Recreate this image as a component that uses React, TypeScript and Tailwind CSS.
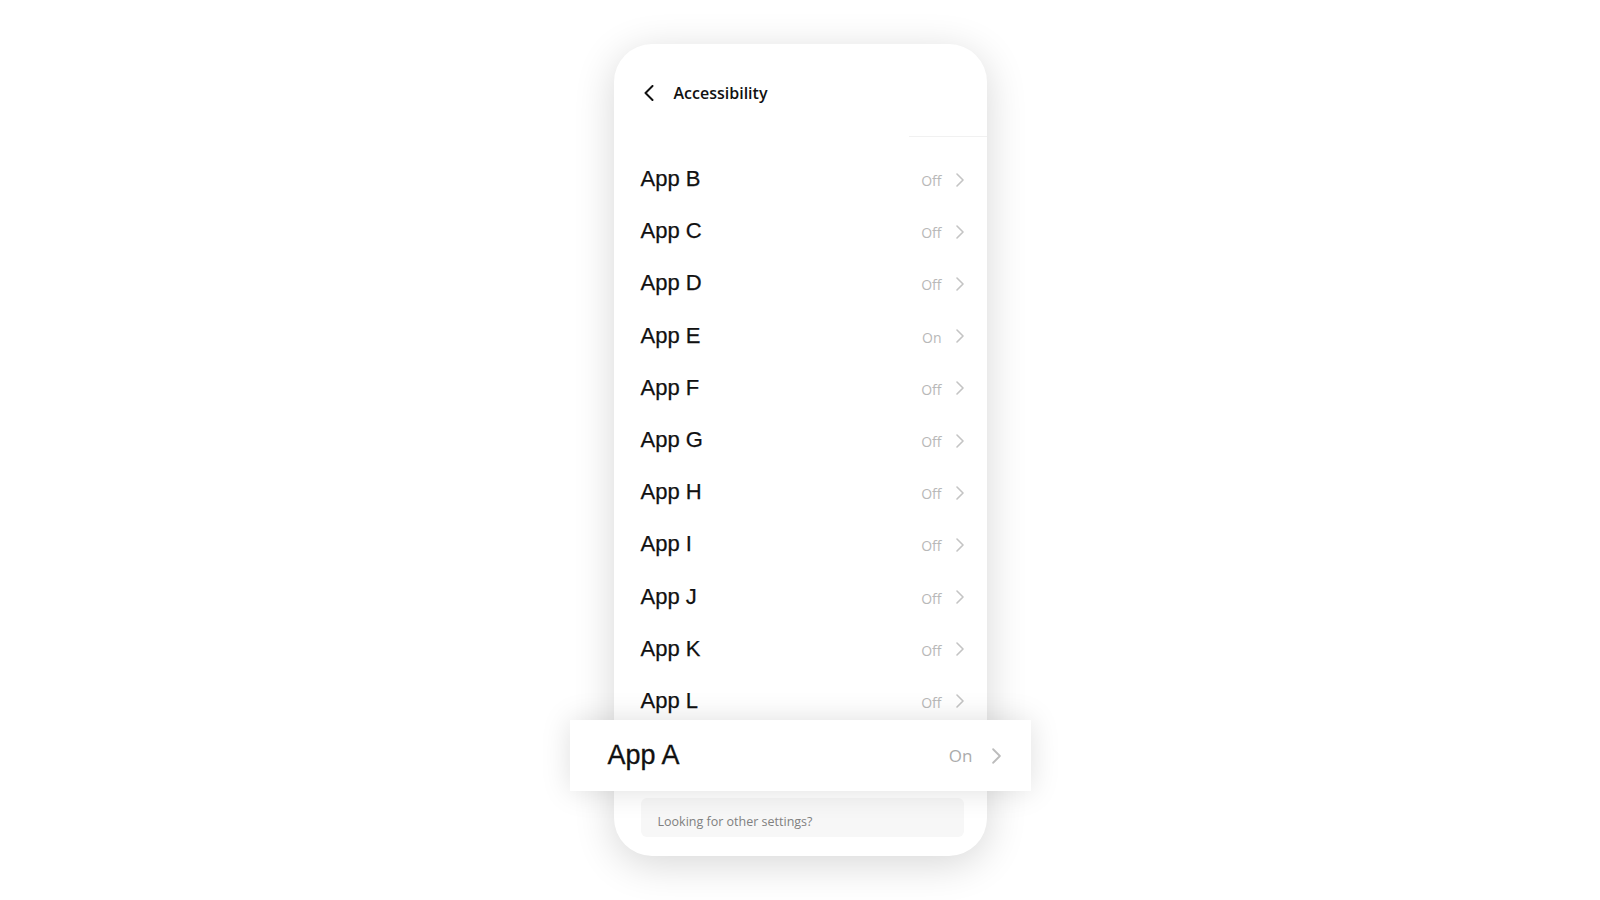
import React from "react";

const Chevron = ({ className, color = "#c4c4c4", sw = 1.6 }: { className: string; color?: string; sw?: number }) => (
  <svg viewBox="0 0 8 14" className={className} fill="none">
    <polyline points="1,1 7,7 1,13" stroke={color} strokeWidth={sw} strokeLinecap="round" strokeLinejoin="round" />
  </svg>
);

const rows: [string, string][] = [
  ["App B", "Off"],
  ["App C", "Off"],
  ["App D", "Off"],
  ["App E", "On"],
  ["App F", "Off"],
  ["App G", "Off"],
  ["App H", "Off"],
  ["App I", "Off"],
  ["App J", "Off"],
  ["App K", "Off"],
  ["App L", "Off"],
];

export default function App() {
  return (
    <div className="w-[1600px] h-[900px] bg-white flex items-center justify-center">
      <div className="w-[373px] h-[812px] bg-white rounded-[38px] shadow-[0_8px_40px_rgba(0,0,0,0.16)] flex flex-col pt-[21px]">
        <div className="h-[56px] flex items-center pl-[30px] gap-[20px]">
          <svg viewBox="0 0 10 16" className="w-[10px] h-[16px]" fill="none">
            <polyline points="8.5,1 1.5,8 8.5,15" stroke="#111" strokeWidth={2} strokeLinecap="round" strokeLinejoin="round" />
          </svg>
          <span className="text-[16px] font-semibold text-[#111] font-['Open_Sans',sans-serif]">Accessibility</span>
        </div>
        <div className="flex justify-end mt-[15px]">
          <div className="w-[78px] h-px bg-[#f1f1f1]" />
        </div>
        <div className="flex flex-col mt-[16px]">
          {rows.map(([name, state]) => (
            <div key={name} className="h-[52.2px] flex items-center pl-[27px] pr-[23px]">
              <span className="flex-1 text-[22px] text-[#111] font-['Liberation_Sans',Arial,sans-serif] leading-none [-webkit-text-stroke:0.25px_#111]">{name}</span>
              <span className="text-[14px] text-[#b8b8b8] font-['Open_Sans',sans-serif] mt-[3px]">{state}</span>
              <Chevron className="w-[8px] h-[14px] ml-[14px] mt-[1px]" />
            </div>
          ))}
        </div>
        <div className="relative z-10 -mx-[44px] mt-[-7px] h-[71px] bg-white shadow-[0_0_30px_rgba(0,0,0,0.13)] flex items-center pl-[38px] pr-[30px]">
          <span className="flex-1 text-[27px] text-[#111] font-['Liberation_Sans',Arial,sans-serif] leading-none [-webkit-text-stroke:0.3px_#111]">App A</span>
          <span className="text-[17px] text-[#ababab] font-['Open_Sans',sans-serif]">On</span>
          <Chevron className="w-[9px] h-[16px] ml-[19px]" color="#bcbcbc" />
        </div>
        <div className="ml-[27px] mr-[23px] mt-[7px] h-[39px] bg-[#f7f7f7] rounded-[6px] flex items-start pl-[17px] pt-[15px]">
          <span className="text-[12.5px] leading-[17px] text-[#808080] font-['Open_Sans',sans-serif]">Looking for other settings?</span>
        </div>
      </div>
    </div>
  );
}
